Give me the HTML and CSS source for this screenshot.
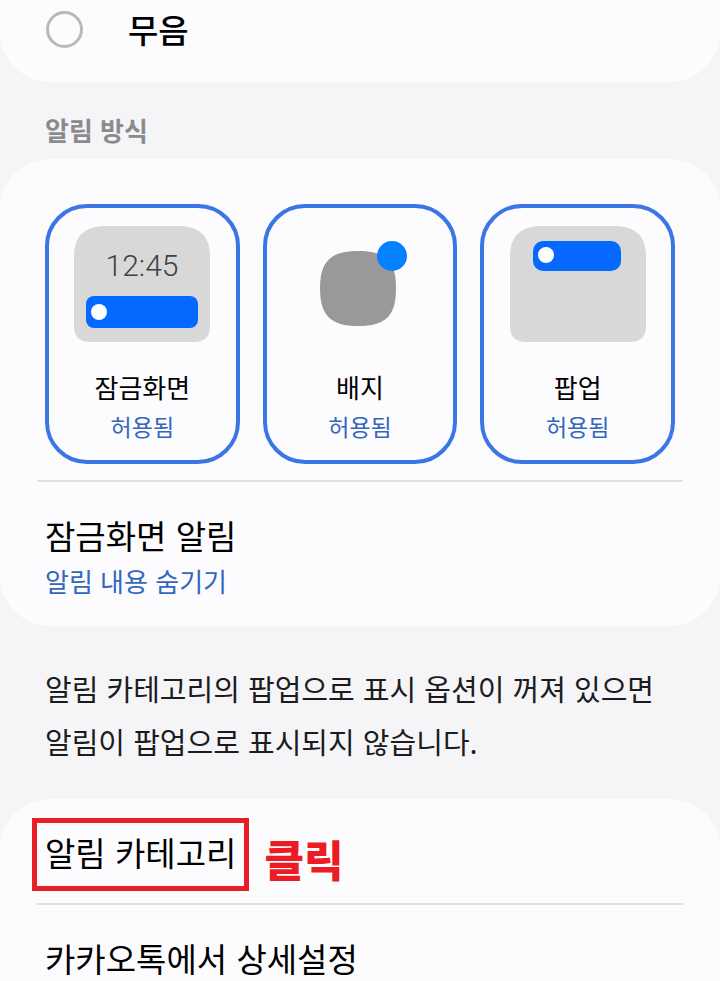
FILE: index.html
```html
<!DOCTYPE html>
<html lang="ko">
  <head>
    <meta charset="UTF-8" />
    <meta name="viewport" content="width=device-width, initial-scale=1.0" />
    <title>알림 설정</title>
    <link rel="stylesheet" href="styles.css">
  </head>
  <body>
    <main class="settings">
      <section class="card card-top">
        <div class="radio-row">
          <input type="radio" id="silent" name="alert-type" />
          <label for="silent">무음</label>
        </div>
      </section>

      <h2 class="section-title">알림 방식</h2>

      <section class="card">
        <div class="methods">
          <button type="button" class="method">
            <svg class="preview" viewBox="0 0 136 116" aria-hidden="true">
              <path class="screen" d="M28 0H108Q136 2 136 30V100Q136 116 120 116H16Q0 116 0 100V30Q0 2 28 0Z" />
              <text class="clock" x="68" y="50">12:45</text>
              <rect class="banner" x="12" y="70" width="112" height="32" rx="8" />
              <circle class="dot" cx="25" cy="86" r="8" />
            </svg>
            <span class="method-name">잠금화면</span>
            <span class="method-state">허용됨</span>
          </button>

          <button type="button" class="method">
            <svg class="preview" viewBox="0 0 136 116" aria-hidden="true">
              <path class="app" d="M66 25C94 25 104 35 104 62C104 90 94 100 66 100C39 100 28 90 28 62C28 35 39 25 66 25Z" />
              <circle class="badge" cx="100" cy="30" r="15" />
            </svg>
            <span class="method-name">배지</span>
            <span class="method-state">허용됨</span>
          </button>

          <button type="button" class="method">
            <svg class="preview" viewBox="0 0 136 116" aria-hidden="true">
              <path class="screen" d="M28 0H108Q136 2 136 30V100Q136 116 120 116H16Q0 116 0 100V30Q0 2 28 0Z" />
              <rect class="banner" x="23" y="15" width="88" height="30" rx="10" />
              <circle class="dot" cx="36" cy="29" r="8" />
            </svg>
            <span class="method-name">팝업</span>
            <span class="method-state">허용됨</span>
          </button>
        </div>

        <hr class="divider" />

        <a href="#" class="row row-lock">
          <span class="row-title">잠금화면 알림</span>
          <span class="row-value">알림 내용 숨기기</span>
        </a>
      </section>

      <p class="note">알림 카테고리의 팝업으로 표시 옵션이 꺼져 있으면 알림이 팝업으로 표시되지 않습니다.</p>

      <section class="card card-bottom">
        <a href="#" class="row row-category">
          <span class="row-title marked">알림 카테고리<strong class="mark">클릭</strong></span>
        </a>
        <hr class="divider" />
        <a href="#" class="row">
          <span class="row-title">카카오톡에서 상세설정</span>
        </a>
      </section>
    </main>
  </body>
</html>
```

FILE: styles.css
```css
* {
  margin: 0;
  padding: 0;
  box-sizing: border-box;
}

body {
  background: #f5f5f7;
  color: #000;
  font-family: "Noto Sans CJK KR", "Noto Sans", sans-serif;
  overflow-x: hidden;
}

.card {
  background: #fcfcfe;
  border-radius: 50px;
}

.card-top {
  border-radius: 0 0 50px 50px;
}

.card-bottom {
  border-radius: 50px 50px 0 0;
}

.radio-row {
  display: flex;
  align-items: center;
  gap: 45px;
  padding: 5px 46px 29px;
}

.radio-row input {
  appearance: none;
  width: 37px;
  height: 37px;
  border: 3px solid #b9b9bb;
  border-radius: 50%;
}

.radio-row input:checked {
  border: 10px solid #3a76e6;
}

.radio-row label {
  font-size: 33px;
  font-weight: 500;
  line-height: 48px;
}

.section-title {
  padding: 28px 45px 9px;
  color: #8b8b8e;
  font-size: 26px;
  font-weight: 700;
  line-height: 40px;
}

/* notification methods */
.methods {
  display: grid;
  grid-template-columns: repeat(3, 1fr);
  gap: 23px;
  padding: 45px 45px 16px;
}

.method {
  display: flex;
  flex-direction: column;
  align-items: center;
  padding: 18px 8px 14px;
  border: 4px solid #3a76e6;
  border-radius: 42px;
  background: none;
  color: #000;
  font-family: inherit;
  cursor: pointer;
}

.preview {
  width: 136px;
  height: 116px;
  margin-bottom: 26px;
}

.method-name {
  font-size: 26px;
  line-height: 38px;
}

.method-state {
  color: #3366bd;
  font-size: 23px;
  line-height: 40px;
}

.screen {
  fill: #d8d8d8;
}

.banner {
  fill: #0568ff;
}

.dot {
  fill: #fff;
}

.app {
  fill: #999;
}

.badge {
  fill: #0381fe;
}

.clock {
  fill: #404040;
  font-family: Roboto, sans-serif;
  font-size: 30px;
  font-weight: 300;
  text-anchor: middle;
}

.divider {
  height: 2px;
  margin: 0 37px;
  border: none;
  background: #e1e1e4;
}

/* list rows */
.row {
  display: block;
  padding: 29px 45px;
  color: #000;
  text-decoration: none;
}

.row-title,
.row-value {
  display: block;
}

.row-title {
  font-size: 33px;
  line-height: 48px;
}

.row-value {
  margin-top: 2px;
  color: #3366bd;
  font-size: 26px;
  line-height: 40px;
}

.row-lock {
  padding-bottom: 25px;
}

.row-category {
  padding-bottom: 27px;
}

.note {
  padding: 36px 45px 31px;
  color: #1c1c1e;
  font-size: 29px;
  line-height: 53px;
}

/* red frame and caption over the category row */
.marked {
  position: relative;
  width: fit-content;
}

.marked::after {
  content: "";
  position: absolute;
  inset: -10px -13px -15px -13px;
  border: 5px solid #e71f27;
}

.mark {
  position: absolute;
  top: 6px;
  left: 100%;
  padding-left: 28px;
  color: #ed1c24;
  font-size: 43px;
  font-weight: 900;
  line-height: 48px;
  white-space: nowrap;
}
```
